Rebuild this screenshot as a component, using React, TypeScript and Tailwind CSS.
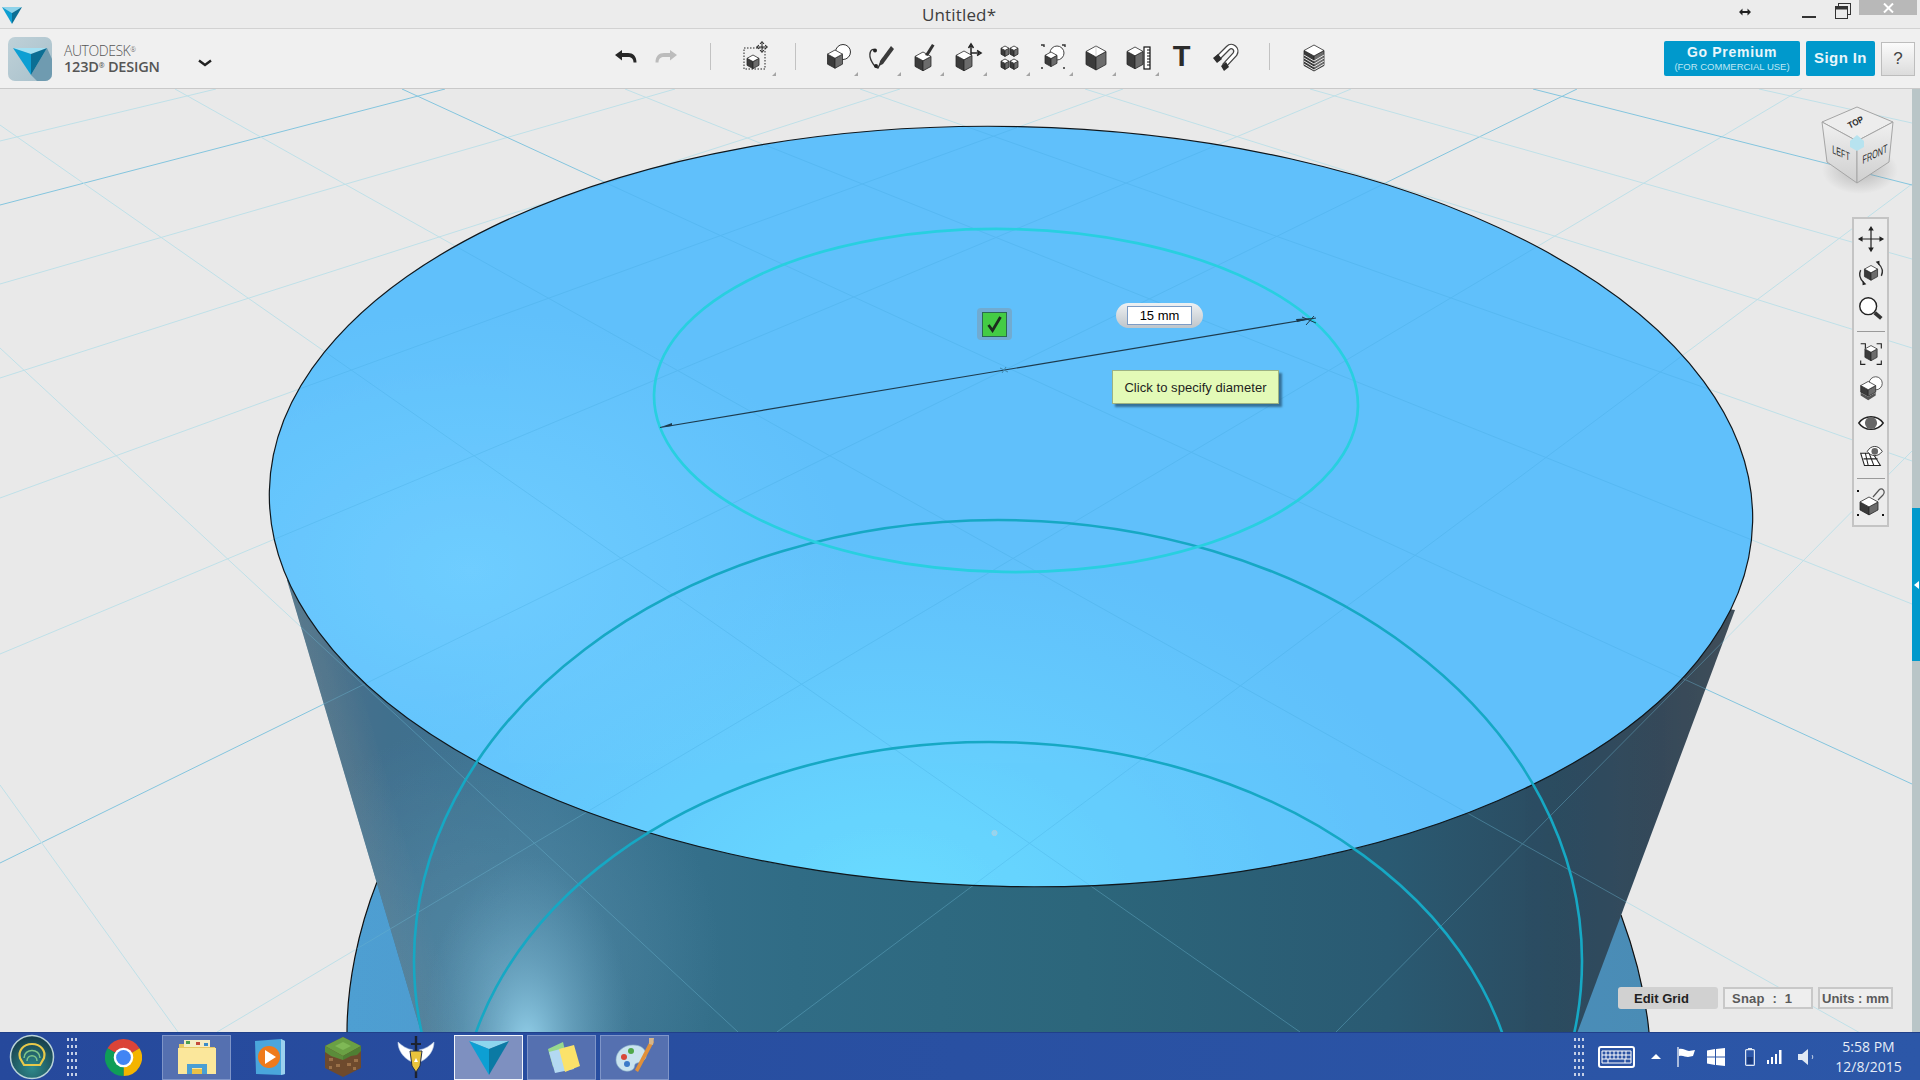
type Line = [number, number, number, number, boolean?];

// grid on the ground plane, in page coordinates
const gridLines: Line[] = [
  [0, 141, 216, 89],
  [0, 205, 445, 89, true],
  [0, 284, 675, 89],
  [0, 378, 900, 89],
  [0, 498, 1123, 89],
  [0, 654, 1351, 89],
  [0, 863, 1577, 89, true],
  [217, 1032, 1802, 89],
  [777, 1032, 1912, 184],
  [1336, 1032, 1912, 451],
  [0, 785, 178, 1032],
  [0, 348, 738, 1032],
  [0, 125, 1300, 1032],
  [175, 89, 1912, 1062],
  [402, 89, 1912, 784, true],
  [625, 89, 1912, 604],
  [860, 89, 1912, 461],
  [1085, 89, 1912, 348],
  [1310, 89, 1912, 259],
  [1533, 89, 1912, 185, true],
  [1759, 89, 1912, 123],
];

function GridLines({ color, strong, opacity }: { color: string; strong: string; opacity?: number }) {
  return (
    <g opacity={opacity}>
      {gridLines.map(([x1, y1, x2, y2, s], i) => (
        <line key={i} x1={x1} y1={y1} x2={x2} y2={y2} stroke={s ? strong : color} strokeWidth={1} />
      ))}
    </g>
  );
}

const CYLINDER = "M287 580 L421 1032 L1577.5 1032 L1735 610 L1011 506 Z";
const LOWER = "M377 882 C358 930 347 985 347 1032 L1649 1032 C1645 990 1634 950 1621 915 Z";

function Scene() {
  return (
    <svg className="absolute inset-0 block" width="1912" height="943" viewBox="0 89 1912 943">
      <defs>
        <linearGradient id="cyl" gradientUnits="userSpaceOnUse" x1="290" y1="0" x2="1735" y2="0">
          <stop offset="0" stopColor="#4f7389" />
          <stop offset="0.07" stopColor="#41708e" />
          <stop offset="0.18" stopColor="#3b7492" />
          <stop offset="0.35" stopColor="#306c85" />
          <stop offset="0.55" stopColor="#2c667b" />
          <stop offset="0.76" stopColor="#2a5a72" />
          <stop offset="0.87" stopColor="#2b4c61" />
          <stop offset="0.95" stopColor="#36495a" />
          <stop offset="1" stopColor="#414f5a" />
        </linearGradient>
        <linearGradient id="edge" gradientUnits="userSpaceOnUse" x1="352" y1="800" x2="392" y2="788">
          <stop offset="0" stopColor="#6a8494" stopOpacity="0.4" />
          <stop offset="1" stopColor="#6a8494" stopOpacity="0" />
        </linearGradient>
        <linearGradient id="lower" gradientUnits="userSpaceOnUse" x1="347" y1="0" x2="1649" y2="0">
          <stop offset="0" stopColor="#4f9fd2" />
          <stop offset="1" stopColor="#4a8cb6" />
        </linearGradient>
        <radialGradient id="spot">
          <stop offset="0" stopColor="#93d0ea" />
          <stop offset="0.45" stopColor="#74afcb" stopOpacity="0.6" />
          <stop offset="1" stopColor="#5f9ab8" stopOpacity="0" />
        </radialGradient>
        <radialGradient id="glow">
          <stop offset="0" stopColor="#5d93ae" stopOpacity="0.65" />
          <stop offset="1" stopColor="#5d93ae" stopOpacity="0" />
        </radialGradient>
        <radialGradient id="face1">
          <stop offset="0" stopColor="#69dcff" />
          <stop offset="1" stopColor="#69d4ff" stopOpacity="0" />
        </radialGradient>
        <radialGradient id="face2">
          <stop offset="0" stopColor="#6fcdff" />
          <stop offset="1" stopColor="#6fcdff" stopOpacity="0" />
        </radialGradient>
        <clipPath id="cylClip">
          <path d={CYLINDER} />
        </clipPath>
        <clipPath id="faceClip">
          <ellipse cx="1011" cy="506.5" rx="741.8" ry="380" transform="rotate(1.2 1011 506.5)" />
        </clipPath>
        <clipPath id="solidClip">
          <path d={CYLINDER} />
          <path d={LOWER} />
        </clipPath>
      </defs>

      <rect x="0" y="89" width="1912" height="943" fill="#e9e9e9" />
      <GridLines color="#bfe0e8" strong="#84c5de" />

      <path d={LOWER} fill="url(#lower)" />
      <path d="M377 882 C358 930 347 985 347 1032" fill="none" stroke="#111" strokeWidth="1.2" />
      <path d="M1621 915 C1634 950 1645 990 1649 1032" fill="none" stroke="#111" strokeWidth="1.2" />

      <path d={CYLINDER} fill="url(#cyl)" />
      <g clipPath="url(#cylClip)">
        <path d="M287 580 L421 1032 L460 1032 L330 580 Z" fill="url(#edge)" />
        <ellipse cx="490" cy="960" rx="230" ry="240" fill="url(#glow)" />
        <ellipse cx="527" cy="1045" rx="105" ry="190" fill="url(#spot)" />
      </g>
      <g clipPath="url(#solidClip)">
        <GridLines color="#6ab4cf" strong="#6ab4cf" opacity={0.42} />
      </g>

      <ellipse cx="1011" cy="506.5" rx="741.8" ry="380" transform="rotate(1.2 1011 506.5)" fill="#60c0fb" />
      <g clipPath="url(#faceClip)">
        <ellipse cx="890" cy="900" rx="560" ry="360" fill="url(#face1)" />
        <ellipse cx="470" cy="570" rx="380" ry="260" fill="url(#face2)" />
        <GridLines color="#3fa6dc" strong="#3fa6dc" opacity={0.28} />
      </g>

      <ellipse cx="1011" cy="506.5" rx="741.8" ry="380" transform="rotate(1.2 1011 506.5)" fill="none" stroke="#10171c" strokeWidth="1.2" />

      {/* sketch circles */}
      <ellipse cx="998" cy="961" rx="584" ry="441" fill="none" stroke="#16a8c4" strokeWidth="2.6" />
      <ellipse cx="989" cy="1130" rx="530" ry="388" fill="none" stroke="#16a8c4" strokeWidth="2.6" />
      <ellipse cx="1006" cy="400.5" rx="352" ry="171.5" transform="rotate(1 1006 400.5)" fill="none" stroke="#28cfe0" strokeWidth="2.7" />

      <circle cx="994.5" cy="833" r="2.6" fill="#8fd6f4" stroke="#a9cfe0" strokeWidth="1" />

      {/* diameter being drawn */}
      <line x1="660" y1="427.5" x2="1316" y2="318" stroke="#1d3b4e" strokeWidth="1.2" />
      <path d="M661 427 L672 423 L672 426 Z" fill="#1d3b4e" />
      <path d="M1313 318 L1296 319 L1297 322 Z" fill="#1d3b4e" />
      <path d="M1302 317 L1316 323 M1306 325 L1314 316" stroke="#1d3b4e" strokeWidth="1" fill="none" />
      <path d="M1000 368 L1008 372 M1002 373 L1006 367" stroke="#3f86ad" strokeWidth="1" fill="none" />
    </svg>
  );
}

function Cube({ cx, top, w, h }: { cx: number; top: number; w: number; h: number }) {
  const d = w * 0.55;
  return (
    <g strokeLinejoin="round">
      <polygon points={`${cx - w},${top + d} ${cx},${top + 2 * d} ${cx},${top + 2 * d + h} ${cx - w},${top + d + h}`} fill="#3b3b3b" stroke="#2a2a2a" strokeWidth="0.8" />
      <polygon points={`${cx + w},${top + d} ${cx},${top + 2 * d} ${cx},${top + 2 * d + h} ${cx + w},${top + d + h}`} fill="#6c6c6c" stroke="#2a2a2a" strokeWidth="0.8" />
      <polygon points={`${cx},${top} ${cx + w},${top + d} ${cx},${top + 2 * d} ${cx - w},${top + d}`} fill="#ffffff" stroke="#2a2a2a" strokeWidth="0.8" />
    </g>
  );
}

function Ico({ children, size = 32 }: { children: React.ReactNode; size?: number }) {
  return (
    <svg width={size} height={size} viewBox="0 0 32 32" className="block">
      {children}
    </svg>
  );
}

const UndoIcon = ({ color }: { color: string }) => (
  <svg width="22" height="13" viewBox="0 0 22 13" className="block">
    <path d="M0 5 L7 0 V3 H13 C18 3 21.5 6 21.5 12.5 H18.5 C18.5 8.5 16 7 13 7 H7 V10.5 Z" fill={color} />
  </svg>
);

const toolIcons: React.ReactNode[] = [
  <Ico key="prim">
    <circle cx="21" cy="11" r="7.5" fill="#fff" stroke="#333" strokeWidth="1" />
    <Cube cx={13} top={9} w={7.5} h={10} />
  </Ico>,
  <Ico key="sketch">
    <path d="M11 9 C5 6 3 14 7 21 C9 25 12 27 13 27 L18 17" fill="none" stroke="#333" strokeWidth="1.4" />
    <circle cx="10" cy="9.5" r="2" fill="#222" />
    <circle cx="11" cy="25" r="2" fill="#222" />
    <path d="M26 5 L29 8 L18 23 L14 25 L15 20 Z" fill="#3a3a3a" />
  </Ico>,
  <Ico key="construct">
    <Cube cx={15} top={11} w={8} h={10} />
    <path d="M17 14 L24 3 L26.5 4.5 L20 15 Z" fill="#333" />
  </Ico>,
  <Ico key="transform">
    <Cube cx={13} top={10} w={8} h={11} />
    <path d="M20 14 V5 M17.5 7 L20 3 L22.5 7 M20 12 H28 M26 9.5 L30 12 L26 14.5" fill="none" stroke="#222" strokeWidth="1.5" />
  </Ico>,
  <Ico key="pattern">
    <Cube cx={11} top={5} w={4} h={6} />
    <Cube cx={20} top={5} w={4} h={6} />
    <Cube cx={11} top={18} w={4} h={6} />
    <Cube cx={20} top={18} w={4} h={6} />
  </Ico>,
  <Ico key="group">
    <circle cx="20" cy="12" r="7" fill="#fff" stroke="#444" strokeWidth="1" />
    <Cube cx={14} top={11} w={6} h={8} />
    <path d="M4 4 H7 V6 M25 4 H28 V6 M4 27 H6 M26 27 H28" fill="none" stroke="#333" strokeWidth="1.4" />
  </Ico>,
  <Ico key="combine">
    <Cube cx={16} top={5} w={10} h={13} />
    <path d="M16 5 L16 16" stroke="#bbb" strokeWidth="0.6" />
  </Ico>,
  <Ico key="measure">
    <Cube cx={12} top={6} w={8} h={13} />
    <rect x="21" y="6" width="6" height="22" fill="#fff" stroke="#111" strokeWidth="1.2" />
    <path d="M24 9 H27 M24 12 H27 M24 15 H27 M24 18 H27 M24 21 H27 M24 24 H27" stroke="#111" strokeWidth="1" />
  </Ico>,
  <span key="t" className="block font-['Liberation_Sans',sans-serif] font-bold text-[29px] leading-none text-[#2b2b2b]">T</span>,
  <Ico key="snap">
    <path d="M8 18 L19 7 C23 3 29 8 26 13 L15 25" fill="none" stroke="#444" strokeWidth="5.5" />
    <path d="M8 18 L19 7 C23 3 29 8 26 13 L15 25" fill="none" stroke="#fff" strokeWidth="3" />
    <path d="M4 17 L9 13 L13 18 L8 22 Z M12 25 L17 21 L20 26 L15 30 Z" fill="#2d2d2d" />
  </Ico>,
];

function Sep() {
  return <div className="w-px h-[27px] bg-[#c2c2c2]" />;
}

function Caret() {
  return <div className="absolute right-[1px] bottom-[3px] w-0 h-0 border-l-[4px] border-l-transparent border-b-[4px] border-b-[#a5a5a5]" />;
}

function TitleBar() {
  return (
    <div className="relative h-[29px] shrink-0 bg-[#ececec] border-b border-[#d2d2d2] flex items-center">
      <svg width="22" height="19" viewBox="0 0 22 19" className="ml-[1px]">
        <polygon points="1,2 21,2 11,8" fill="#8ed3ea" />
        <polygon points="1,2 11,8 11,19" fill="#0e9fd2" />
        <polygon points="21,2 11,8 11,19" fill="#0b6e94" />
      </svg>
      <div className="absolute left-[922px] top-[3px] font-['Open_Sans',sans-serif] text-[17px] leading-[24px] tracking-[0.15px] text-[#3e3e3e]">
        Untitled*
      </div>
      <div className="ml-auto flex items-start h-full">
        <svg width="12" height="8" viewBox="0 0 12 8" className="mt-[8px] mr-[51px]">
          <path d="M0 4 L3.5 0.5 V3 H8.5 V0.5 L12 4 L8.5 7.5 V5 H3.5 V7.5 Z" fill="#222" />
        </svg>
        <div className="w-[14px] h-[2px] bg-[#333] mt-[16px] mr-[19px]" />
        <svg width="16" height="16" viewBox="0 0 16 16" className="mt-[3px] mr-[8px]">
          <rect x="3.5" y="0.5" width="12" height="11" fill="none" stroke="#333" />
          <rect x="0.5" y="3.5" width="12" height="12" fill="#ececec" stroke="#333" />
          <rect x="0.5" y="3.5" width="12" height="3" fill="#333" />
        </svg>
        <div className="w-[58px] h-[15px] bg-[#b8b8b8] mr-[3px] flex items-center justify-center">
          <svg width="11" height="10" viewBox="0 0 11 10">
            <path d="M1 0.5 L10 9.5 M10 0.5 L1 9.5" stroke="#fff" strokeWidth="2" />
          </svg>
        </div>
      </div>
    </div>
  );
}

function Toolbar() {
  return (
    <div className="h-[60px] shrink-0 bg-[#f0f0f0] border-b border-[#c9c9c9] flex items-center">
      <div className="w-[605px] flex items-center shrink-0">
        <div className="relative ml-[8px] w-[44px] h-[44px] rounded-[7px] overflow-hidden bg-gradient-to-br from-[#bfd1d8] to-[#a8c0cb]">
          <svg width="44" height="44" viewBox="0 0 44 44" className="block">
            <polygon points="23,38 39,11 44,22 44,44 29,44" fill="#6f9bb0" />
            <polygon points="5,11 39,11 23,17" fill="#a4e0f2" />
            <polygon points="5,11 23,17 23,38" fill="#0d9fd3" />
            <polygon points="39,11 23,17 23,38" fill="#0b6e94" />
          </svg>
        </div>
        <div className="ml-[12px] w-[134px] text-[#555] leading-none">
          <div className="font-['Open_Sans',sans-serif] font-light text-[14px] leading-[16px] tracking-[-0.45px]">AUTODESK<sup className="text-[7px]">®</sup></div>
          <div className="font-['Open_Sans',sans-serif] font-semibold text-[14.5px] leading-[16px] tracking-[-0.2px]">123D<sup className="text-[7px]">®</sup> DESIGN</div>
        </div>
        <svg width="14" height="8" viewBox="0 0 14 8" className="mt-[8px]">
          <path d="M1 1.5 L7 6 L13 1.5" fill="none" stroke="#222" strokeWidth="2.4" />
        </svg>
      </div>

      {/* centre tools sit a little above the bar's middle */}
      <div className="flex items-center mb-[4px]">
        <div className="w-[41px] flex justify-center"><UndoIcon color="#272727" /></div>
        <div className="w-[41px] flex justify-center -scale-x-100"><UndoIcon color="#bcbcbc" /></div>
        <div className="ml-[23px]"><Sep /></div>

        <div className="relative ml-[24px] w-[40px] h-[44px] flex items-center justify-center">
          <Ico>
            <rect x="5" y="7" width="21" height="21" fill="none" stroke="#222" strokeWidth="1" strokeDasharray="1.5 1.5" />
            <Cube cx={14} top={14} w={6} h={7} />
            <path d="M23 1 V11 M18 6 H28 M21 3 L23 0.5 L25 3 M21 9 L23 11.5 L25 9 M20 4 L17.5 6 L20 8 M26 4 L28.5 6 L26 8" fill="none" stroke="#222" strokeWidth="1" />
          </Ico>
          <div className="absolute -right-[1px] bottom-[3px] w-0 h-0 border-l-[4px] border-l-transparent border-b-[4px] border-b-[#a5a5a5]" />
        </div>
        <div className="ml-[20px]"><Sep /></div>

        <div className="ml-[20px] flex">
          {toolIcons.map((icon, i) => (
            <div key={i} className="relative w-[43px] h-[44px] flex items-center justify-center">
              {icon}
              {i < 8 && <Caret />}
            </div>
          ))}
        </div>
        <div className="ml-[23px]"><Sep /></div>

        <div className="ml-[22px] w-[43px] flex justify-center">
          <Ico>
            <Cube cx={16} top={4} w={10} h={15} />
            <path d="M6 14 L16 20 L26 14 M6 17 L16 23 L26 17 M6 20 L16 26 L26 20 M6 23 L16 29 L26 23" fill="none" stroke="#e6e6e6" strokeWidth="1" />
          </Ico>
        </div>
      </div>

      <div className="ml-auto pr-[5px] flex items-center gap-[6px] font-['Liberation_Sans',sans-serif]">
        <div className="w-[136px] h-[35px] rounded-[2px] bg-[#0099cc] flex flex-col items-center justify-center text-white">
          <div className="font-bold text-[14px] leading-[15px] tracking-[0.7px] text-[#e8f6fb]">Go Premium</div>
          <div className="text-[9.5px] leading-[12px] mt-[1px] text-[#bfe7f4]">(FOR COMMERCIAL USE)</div>
        </div>
        <div className="w-[69px] h-[35px] rounded-[2px] bg-[#0099cc] flex items-center justify-center font-bold text-[15px] tracking-[0.4px] text-[#e8f6fb]">
          Sign In
        </div>
        <div className="w-[34px] h-[34px] border border-[#bdbdbd] bg-gradient-to-b from-[#fbfbfb] to-[#dcdcdc] flex items-center justify-center text-[17px] text-[#444]">
          ?
        </div>
      </div>
    </div>
  );
}

function ViewCube() {
  return (
    <svg width="90" height="96" viewBox="1812 100 90 96" className="absolute left-[1812px] top-[11px]">
      <defs>
        <linearGradient id="vl" x1="0" y1="0" x2="0" y2="1">
          <stop offset="0" stopColor="#f0f0f0" />
          <stop offset="1" stopColor="#cfcfcf" />
        </linearGradient>
        <radialGradient id="vs">
          <stop offset="0" stopColor="#777" stopOpacity="0.45" />
          <stop offset="1" stopColor="#777" stopOpacity="0" />
        </radialGradient>
      </defs>
      <ellipse cx="1860" cy="170" rx="38" ry="24" fill="url(#vs)" />
      <polygon points="1857,107 1893,122 1857,141 1822,122" fill="#ededed" stroke="#a5a5a5" />
      <polygon points="1822,122 1857,141 1857,183 1827,162" fill="url(#vl)" stroke="#a5a5a5" />
      <polygon points="1893,122 1857,141 1857,183 1889,162" fill="url(#vl)" stroke="#a5a5a5" />
      <polygon points="1857,135 1864,141 1864,147 1857,151 1850,147 1850,141" fill="#b7e3ef" />
      <g fontFamily="'Liberation Sans', sans-serif" fill="#2c2c2c" textAnchor="middle">
        <text transform="translate(1857 125) rotate(-27) scale(0.9 1)" fontSize="9" fontWeight="700">TOP</text>
        <text transform="translate(1841 157) skewY(24) scale(0.72 1.15)" fontSize="10">LEFT</text>
        <text transform="translate(1875 158) skewY(-26) scale(0.72 1.15)" fontSize="10">FRONT</text>
      </g>
    </svg>
  );
}

function NavPanel() {
  return (
    <div className="absolute left-[1852px] top-[128px] w-[37px] h-[310px] border-2 border-[#c4c4c4] bg-[#ececec] flex flex-col items-center pt-[5px]">
      <Ico size={30}>
        <path d="M16 4 V28 M4 16 H28" stroke="#222" strokeWidth="1.3" />
        <path d="M16 2 L13 7 H19 Z M16 30 L13 25 H19 Z M2 16 L7 13 V19 Z M30 16 L25 13 V19 Z" fill="#222" />
      </Ico>
      <div className="mt-[4px]">
        <Ico size={30}>
          <Cube cx={16} top={8} w={7} h={8} />
          <path d="M24 6 C28 10 29 15 27 19 M8 26 C4 22 3 17 5 13" fill="none" stroke="#333" strokeWidth="1.5" />
          <path d="M21 4 L25 3 L25 8 Z M11 28 L7 29 L7 24 Z" fill="#222" />
        </Ico>
      </div>
      <div className="mt-[6px]">
        <Ico size={30}>
          <circle cx="13" cy="13" r="9" fill="#fff" stroke="#222" strokeWidth="1.5" />
          <path d="M20 20 L27 26" stroke="#333" strokeWidth="4" />
        </Ico>
      </div>
      <div className="w-[28px] h-px bg-[#9a9a9a] mt-[7px] mb-[7px]" />
      <Ico size={30}>
        <path d="M9 9 V4 H4 M21 4 H26 V9 M4 22 V26 H9 M21 26 H26 V22" fill="none" stroke="#222" strokeWidth="1.2" transform="translate(1 1)" />
        <Cube cx={16} top={7} w={6.5} h={9} />
      </Ico>
      <div className="mt-[4px]">
        <Ico size={30}>
          <circle cx="21" cy="11" r="7" fill="#fff" stroke="#555" strokeWidth="1" />
          <Cube cx={13} top={9} w={8} h={7} />
          <polygon points="5,21 13,25.4 21,21 21,24 13,29 5,24" fill="#555" />
        </Ico>
      </div>
      <div className="mt-[5px]">
        <Ico size={30}>
          <path d="M3 16 C9 7 23 7 29 16 C23 25 9 25 3 16 Z" fill="#fff" stroke="#222" strokeWidth="1.5" />
          <circle cx="16" cy="16" r="6.5" fill="#666" />
        </Ico>
      </div>
      <div className="mt-[4px]">
        <Ico size={30}>
          <path d="M5 12 H18 L26 25 H9 Z M8 18 H23 M10 12 L13 25 M14 12 L19 25" fill="#fff" stroke="#222" strokeWidth="1.1" />
          <path d="M12 10 C16 3 24 3 28 10 C24 16 16 16 12 10 Z" fill="#fff" stroke="#333" strokeWidth="1" />
          <circle cx="20" cy="10" r="3.5" fill="#666" />
        </Ico>
      </div>
      <div className="w-[28px] h-px bg-[#9a9a9a] mt-[6px] mb-[6px]" />
      <Ico size={32}>
        <Cube cx={14} top={12} w={9} h={8} />
        <path d="M18 12 L24 5 C27 2 31 6 28 10 L23 15" fill="none" stroke="#555" strokeWidth="1.2" />
        <rect x="2" y="5" width="2" height="2" fill="#111" />
        <rect x="2" y="29" width="2" height="2" fill="#111" />
        <rect x="27" y="29" width="2" height="2" fill="#111" />
      </Ico>
    </div>
  );
}

function BottomControls() {
  return (
    <div className="absolute left-[1618px] top-[898px] flex gap-[5px] font-['Liberation_Sans',sans-serif] font-bold text-[13px] leading-none">
      <div className="w-[100px] h-[22px] rounded-[3px] bg-[#d1d1d1] text-[#222] flex items-center pl-[16px]">Edit Grid</div>
      <div className="w-[90px] h-[22px] border-2 border-[#c8c8c8] bg-[#eeeeee] text-[#5a5a5a] flex items-center pl-[7px] whitespace-pre tracking-[0.25px]">{"Snap  :  1"}</div>
      <div className="w-[75px] h-[22px] border-2 border-[#c8c8c8] bg-[#eeeeee] text-[#5a5a5a] flex items-center pl-[2px] whitespace-pre">Units : mm</div>
    </div>
  );
}

function SketchOverlays() {
  return (
    <>
      <div className="absolute left-[977px] top-[219px] w-[35px] h-[32px] rounded-[4px] bg-[#7d9db5]/60 flex items-center justify-center">
        <div className="w-[25px] h-[25px] bg-[#44cc44] border border-[#2a6a50] flex items-center justify-center">
          <svg width="17" height="18" viewBox="0 0 17 18">
            <path d="M2.5 10 L6.5 15.5 L14.5 2" fill="none" stroke="#1c2b1e" strokeWidth="2.8" />
          </svg>
        </div>
      </div>
      <div className="absolute left-[1116px] top-[214px] w-[87px] h-[25px] rounded-full bg-gradient-to-b from-[#eef1f3] to-[#bfc5ca] flex items-center justify-center">
        <div className="w-[65px] h-[19px] bg-white border border-[#7c9cc6] flex items-center justify-center font-['Liberation_Sans',sans-serif] text-[13px] text-black">
          15 mm
        </div>
      </div>
      <div className="absolute left-[1112px] top-[281px] w-[167px] h-[34px] pt-px bg-[#e3fab7] border border-[#9db283] shadow-[3px_3px_2px_rgba(30,70,100,0.65)] flex items-center justify-center font-['Liberation_Sans',sans-serif] text-[13px] tracking-[0.05px] text-[#1e1e1e]">
        Click to specify diameter
      </div>
    </>
  );
}

function Grip() {
  return (
    <div className="grid grid-cols-3 gap-x-[2px] gap-y-[4px] w-[10px]">
      {Array.from({ length: 18 }).map((_, i) => (
        <div key={i} className="w-[2px] h-[3px] bg-[#c4cfe6]" />
      ))}
    </div>
  );
}

function TaskButton({ state, children }: { state?: "open" | "active"; children: React.ReactNode }) {
  let look = "";
  if (state === "active") look = "bg-[#7e90c0] border border-[#f2f5fb]";
  if (state === "open") look = "bg-[#5570b0] border border-[#7f95c8]";
  return <div className={`w-[69px] h-[45px] mt-[1px] flex items-center justify-center ${look}`}>{children}</div>;
}

function Taskbar() {
  return (
    <div className="h-[48px] shrink-0 bg-gradient-to-r from-[#26499c] to-[#2c57a8] border-t border-[#20408a] flex items-center relative">
      <svg width="46" height="46" viewBox="0 0 46 46" className="ml-[9px] shrink-0">
        <defs>
          <radialGradient id="orb" cx="0.5" cy="0.75" r="0.7">
            <stop offset="0" stopColor="#2f8a8c" />
            <stop offset="1" stopColor="#173f4c" />
          </radialGradient>
        </defs>
        <ellipse cx="23" cy="23" rx="21.5" ry="21.5" fill="url(#orb)" stroke="#b9d3d8" strokeWidth="1.5" />
        <path d="M23 10 C14 10 9 17 11 24 L15 31 H31 L35 24 C37 17 32 10 23 10 Z" fill="none" stroke="#e8c94a" strokeWidth="2.2" />
        <path d="M18 27 C18 20 28 20 28 27 M15 24 C15 14 31 14 31 24" fill="none" stroke="#7fc58a" strokeWidth="1.5" />
      </svg>
      <div className="ml-[12px] mr-[12px]"><Grip /></div>

      <div className="flex gap-[4px]">
        <TaskButton>
          <svg width="37" height="37" viewBox="0 0 36 36">
            <path d="M18 18 L2.41 9 A18 18 0 0 1 33.59 9 Z" fill="#db4437" />
            <path d="M18 18 L33.59 9 A18 18 0 0 1 18 36 Z" fill="#f4b400" />
            <path d="M18 18 L18 36 A18 18 0 0 1 2.41 9 Z" fill="#0f9d58" />
            <circle cx="18" cy="18" r="9.5" fill="#fff" />
            <circle cx="18" cy="18" r="7.2" fill="#4285f4" />
          </svg>
        </TaskButton>
        <TaskButton state="open">
          <svg width="40" height="40" viewBox="0 0 40 40">
            <path d="M2 7 H17 L19 10 H38 V34 H2 Z" fill="#e8c864" />
            <rect x="7" y="3" width="26" height="7" fill="#f5ecc4" />
            <rect x="9" y="4" width="4" height="3" fill="#4c9f50" />
            <rect x="19" y="5" width="4" height="3" fill="#c64a3a" />
            <rect x="27" y="6" width="4" height="3" fill="#3c8cc8" />
            <path d="M1 11 H39 V37 H1 Z" fill="#fbe79b" />
            <path d="M10 37 V27 H30 V37 H25 V31 H15 V37 Z" fill="#4a9fd4" />
            <rect x="15" y="32" width="10" height="5" fill="#e9c048" />
          </svg>
        </TaskButton>
        <TaskButton>
          <svg width="34" height="38" viewBox="0 0 34 38">
            <polygon points="2,3 28,1 32,3 32,36 28,37 3,36" fill="#4aa6dc" />
            <polygon points="28,1 32,3 32,36 28,37" fill="#9bd1ee" />
            <circle cx="16" cy="19" r="11" fill="#ee7a1c" />
            <polygon points="12,12 12,26 23,19" fill="#fff" />
          </svg>
        </TaskButton>
        <TaskButton>
          <svg width="40" height="42" viewBox="0 0 40 42">
            <polygon points="20,1 38,10 38,32 20,41 2,32 2,10" fill="#6e4a2d" />
            <polygon points="20,1 38,10 20,20 2,10" fill="#6aa044" />
            <polygon points="2,10 20,20 20,24 14,22 8,20 2,16" fill="#5b8c3a" />
            <polygon points="38,10 20,20 20,24 28,20 34,19 38,15" fill="#4f7f33" />
            <path d="M6 22 h4 v3 h-4 Z M13 28 h4 v3 h-4 Z M6 30 h3 v3 h-3 Z M24 27 h4 v3 h-4 Z M31 23 h4 v3 h-4 Z M30 31 h3 v3 h-3 Z" fill="#9a7048" />
            <polygon points="20,6 28,10 20,14 12,10" fill="#7fb856" />
          </svg>
        </TaskButton>
        <TaskButton>
          <svg width="38" height="42" viewBox="0 0 38 42">
            <rect x="17.8" y="0" width="2.4" height="42" fill="#1c2230" />
            <rect x="14" y="7" width="10" height="2" fill="#1c2230" />
            <path d="M16 14 C10 13 5 10 1 6 C1 14 6 22 15 26 Z" fill="#fff" stroke="#c0d0e8" strokeWidth="0.6" />
            <path d="M22 14 C28 13 33 10 37 6 C37 14 32 22 23 26 Z" fill="#fff" stroke="#c0d0e8" strokeWidth="0.6" />
            <path d="M13 15 H25 L23 30 L19 36 L15 30 Z" fill="#e9c43c" stroke="#24304a" strokeWidth="1" />
            <polygon points="19,22 21,26 17,26" fill="#fff" />
          </svg>
        </TaskButton>
        <TaskButton state="active">
          <svg width="42" height="38" viewBox="0 0 42 38">
            <polygon points="1,3 41,3 21,11" fill="#8ed6ee" />
            <polygon points="1,3 21,11 21,37" fill="#0d9fd3" />
            <polygon points="41,3 21,11 21,37" fill="#0b7aa4" />
          </svg>
        </TaskButton>
        <TaskButton state="open">
          <svg width="38" height="36" viewBox="0 0 38 36">
            <polygon points="5,10 20,3 25,24 10,28" fill="#97d88e" />
            <polygon points="6,13 25,8 31,30 12,34" fill="#b3d9f2" />
            <polygon points="16,10 31,6 37,27 22,33" fill="#fbe26a" />
          </svg>
        </TaskButton>
        <TaskButton state="open">
          <svg width="40" height="40" viewBox="0 0 40 40">
            <path d="M18 8 C8 8 1 15 1 23 C1 31 10 37 17 33 C21 31 18 27 22 26 C28 25 32 22 31 17 C30 11 25 8 18 8 Z" fill="#c9e3ef" stroke="#8bb2c8" strokeWidth="0.6" />
            <circle cx="9" cy="20" r="3" fill="#d8483a" />
            <circle cx="16" cy="14" r="3" fill="#4fa84a" />
            <circle cx="12" cy="27" r="3" fill="#3b79c8" />
            <path d="M36 2 L39 5 L23 35 L20 33 Z" fill="#e0903a" />
            <path d="M34 1 L39 1 L38 8 L34 7 Z" fill="#d6b68a" />
          </svg>
        </TaskButton>
      </div>

      <div className="ml-auto flex items-center">
        <Grip />
        <svg width="37" height="22" viewBox="0 0 37 22" className="ml-[14px]">
          <rect x="1" y="1" width="35" height="20" rx="2" fill="#2b53a3" stroke="#fff" strokeWidth="2" />
          <path d="M4 5 H33 V17 H4 Z M4 9 H33 M4 13 H33 M8 5 V13 M12 5 V13 M16 5 V13 M20 5 V13 M24 5 V13 M28 5 V13 M10 13 V17 M27 13 V17" fill="none" stroke="#fff" strokeWidth="1" />
        </svg>
        <div className="ml-[16px] w-0 h-0 border-l-[5px] border-r-[5px] border-b-[5px] border-l-transparent border-r-transparent border-b-white" />
        <svg width="18" height="20" viewBox="0 0 18 20" className="ml-[16px]">
          <path d="M1 0 V20" stroke="#fff" strokeWidth="1.2" />
          <path d="M2 2 C6 1 9 4 12 4 L18 3 L16 9 L11 10 C8 10 6 8 2 9 Z" fill="#fff" />
        </svg>
        <svg width="18" height="18" viewBox="0 0 18 18" className="ml-[12px]">
          <path d="M0 2.5 L8 1 V8.5 H0 Z M9 1 L18 0 V8.5 H9 Z M0 9.5 H8 V17 L0 15.5 Z M9 9.5 H18 V18 L9 17 Z" fill="#fff" />
        </svg>
        <svg width="10" height="18" viewBox="0 0 10 18" className="ml-[20px]">
          <rect x="3" y="0" width="4" height="2" fill="#dfe8f4" />
          <rect x="0.6" y="1.6" width="8.8" height="15.8" rx="1" fill="none" stroke="#dfe8f4" strokeWidth="1.2" />
          <rect x="2.2" y="9" width="5.6" height="7" fill="#1a3a7c" />
        </svg>
        <svg width="16" height="15" viewBox="0 0 16 15" className="ml-[12px]">
          <path d="M0 15 V11 H2 V15 Z M4 15 V8 H6 V15 Z M8 15 V5 H10 V15 Z M12 15 V1 H14.5 V15 Z" fill="#fff" />
        </svg>
        <svg width="17" height="18" viewBox="0 0 17 18" className="ml-[15px]">
          <path d="M0 6 H4 L10 1 V17 L4 12 H0 Z" fill="#dfe8f4" />
          <path d="M14 7 C15 8 15 10 14 11" fill="none" stroke="#c4d2e8" />
        </svg>
        <div className="w-[67px] ml-[20px] mr-[18px] text-center font-['Open_Sans',sans-serif] text-[14px] leading-[20px] text-[#e6edf7] whitespace-nowrap">
          <div>5:58 PM</div>
          <div>12/8/2015</div>
        </div>
      </div>
    </div>
  );
}

function ScrollStrip() {
  return (
    <div className="w-2 shrink-0 flex flex-col bg-[#b9c5c7]">
      <div className="h-[419px]" />
      <div className="h-[153px] bg-[#0099cc] flex items-center justify-center">
        <div className="w-0 h-0 border-y-[4px] border-y-transparent border-r-[5px] border-r-white" />
      </div>
    </div>
  );
}

export default function App() {
  return (
    <div className="w-[1920px] h-[1080px] overflow-hidden flex flex-col font-['Liberation_Sans',sans-serif] bg-[#e9e9e9]">
      <TitleBar />
      <Toolbar />
      <div className="flex-1 min-h-0 flex">
        <div className="relative flex-1 overflow-hidden">
          <Scene />
          <SketchOverlays />
          <ViewCube />
          <NavPanel />
          <BottomControls />
        </div>
        <ScrollStrip />
      </div>
      <Taskbar />
    </div>
  );
}
